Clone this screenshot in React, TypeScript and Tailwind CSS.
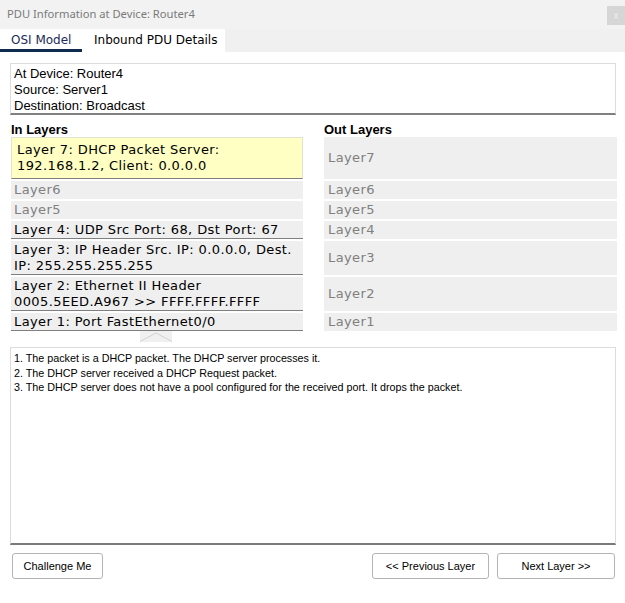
import React from 'react';

const verdana = "font-['DejaVu_Sans',Verdana,sans-serif]";
const arial = "font-['Liberation_Sans',Arial,sans-serif]";

type Row = { lines: string[]; active: boolean; height: string; out: string; yellow?: boolean };

const rows: Row[] = [
  { lines: ['Layer 7: DHCP Packet Server:', '192.168.1.2, Client: 0.0.0.0'], active: true, height: 'h-[42px]', out: 'Layer7', yellow: true },
  { lines: ['Layer6'], active: false, height: 'h-[18px]', out: 'Layer6' },
  { lines: ['Layer5'], active: false, height: 'h-[18px]', out: 'Layer5' },
  { lines: ['Layer 4: UDP Src Port: 68, Dst Port: 67'], active: true, height: 'h-[18px]', out: 'Layer4' },
  { lines: ['Layer 3: IP Header Src. IP: 0.0.0.0, Dest.', 'IP: 255.255.255.255'], active: true, height: 'h-[34px]', out: 'Layer3' },
  { lines: ['Layer 2: Ethernet II Header', '0005.5EED.A967 >> FFFF.FFFF.FFFF'], active: true, height: 'h-[34px]', out: 'Layer2' },
  { lines: ['Layer 1: Port FastEthernet0/0'], active: true, height: 'h-[18px]', out: 'Layer1' },
];

const Lines: React.FC<{ lines: string[] }> = ({ lines }) => (
  <div className="leading-[16px] whitespace-nowrap">
    {lines.map((l) => (
      <div key={l}>{l}</div>
    ))}
  </div>
);

const LayerCell: React.FC<{ row: Row }> = ({ row }) => {
  if (row.yellow) {
    return (
      <div className={`${row.height} flex items-center bg-[#ffffc4] border border-[#e2e2d0] border-b-[#7f7f7f] pl-[5px] text-black`}>
        <Lines lines={row.lines} />
      </div>
    );
  }
  if (row.active) {
    return (
      <div className={`${row.height} flex items-center bg-[#efefef] border-b border-b-[#7f7f7f] pl-[3px] text-black`}>
        <Lines lines={row.lines} />
      </div>
    );
  }
  return (
    <div className={`${row.height} flex items-center bg-[#efefef] pl-[3px] text-[#808080]`}>
      <Lines lines={row.lines} />
    </div>
  );
};

const PduButton: React.FC<{ label: string; width: string }> = ({ label, width }) => (
  <button className={`${width} h-[26px] rounded-[3px] border border-[#b4b4b4] bg-white text-[11px] text-black ${arial}`}>
    {label}
  </button>
);

export default function App() {
  return (
    <div className="w-[625px] h-[603px] bg-white overflow-hidden">
      {/* title bar */}
      <div className="h-[29px] bg-[#f2f2f2] flex items-start">
        <span className="pl-[7px] pt-[6px] text-[11.2px] text-[#7a7a7a] font-['Noto_Sans',sans-serif] leading-[15px]">
          PDU Information at Device: Router4
        </span>
        <div className="ml-auto mt-[6px] w-[18px] h-[19px] bg-[#d6d6d6] flex items-center justify-center text-[10px] text-[#ededed] font-['Liberation_Sans',sans-serif] leading-none">
          x
        </div>
      </div>

      {/* tabs */}
      <div className={`h-[23px] flex bg-[#f0f0f0] ${verdana} text-[12px]`}>
        <div className="w-[82px] bg-white border-b-[3px] border-b-[#0e2a4c] pl-[11px] pt-[3px] text-[#1c2b5a] leading-[16px]">
          OSI Model
        </div>
        <div className="w-[143px] bg-white pl-[12px] pt-[3px] text-black leading-[16px]">Inbound PDU Details</div>
      </div>

      <div className="pl-[10px] pr-[9px] pt-[11px]">
        {/* info box */}
        <div className={`h-[52px] border border-[#dcdcdc] border-b-2 border-b-[#808080] pl-[3px] pt-[2px] text-[13px] leading-[16px] text-black ${arial}`}>
          <div>At Device: Router4</div>
          <div>Source: Server1</div>
          <div>Destination: Broadcast</div>
        </div>

        {/* layers */}
        <div className="grid grid-cols-[292px_293px] gap-x-[21px] pl-[1px]">
          <div className={`h-[22px] flex items-end text-[13px] font-bold leading-[15px] ${arial}`}>In Layers</div>
          <div className={`h-[22px] flex items-end text-[13px] font-bold leading-[15px] ${arial}`}>Out Layers</div>

          <div className={`flex flex-col gap-[2px] text-[13px] tracking-[0.4px] ${verdana}`}>
            {rows.map((r) => (
              <LayerCell key={r.out} row={r} />
            ))}
          </div>
          <div className={`flex flex-col gap-[2px] text-[13px] tracking-[0.4px] ${verdana}`}>
            {rows.map((r) => (
              <div key={r.out} className={`${r.height} flex items-center bg-[#efefef] pl-[4px] text-[#808080]`}>
                {r.out}
              </div>
            ))}
          </div>
        </div>

        {/* collapse chevron */}
        <div className="w-[292px] flex justify-center">
          <svg width="32" height="11" viewBox="0 0 32 11">
            <rect x="0" y="0" width="32" height="11" fill="#f0f0f0" />
            <polyline points="0,10.5 16,2 32,10.5" fill="none" stroke="#d2d2d2" strokeWidth="1" />
          </svg>
        </div>

        {/* detail box */}
        <div className={`mt-[5px] h-[198px] border border-[#dcdcdc] border-b-2 border-b-[#7a7a7a] pl-[3px] pt-[3px] text-[10.75px] leading-[14.5px] text-black ${arial}`}>
          <div>1. The packet is a DHCP packet. The DHCP server processes it.</div>
          <div>2. The DHCP server received a DHCP Request packet.</div>
          <div>3. The DHCP server does not have a pool configured for the received port. It drops the packet.</div>
        </div>

        {/* buttons */}
        <div className="mt-[8px] flex pl-[2px]">
          <PduButton label="Challenge Me" width="w-[91px]" />
          <div className="ml-auto flex gap-[8px] pr-[1px]">
            <PduButton label="<< Previous Layer" width="w-[117px]" />
            <PduButton label="Next Layer >>" width="w-[118px]" />
          </div>
        </div>
      </div>
    </div>
  );
}
